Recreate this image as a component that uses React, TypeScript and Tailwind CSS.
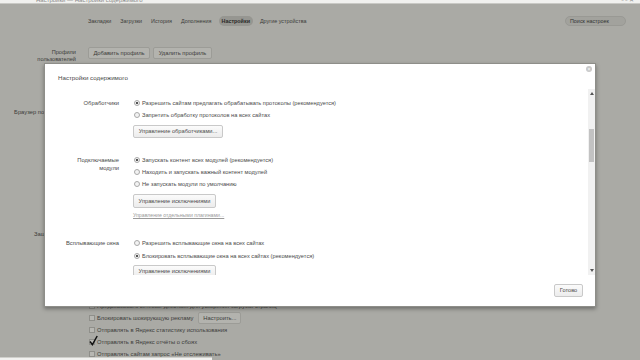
import type { ReactNode } from 'react';

function Radio({ checked, children }: { checked?: boolean; children: ReactNode }) {
  return (
    <div className="flex h-[12px] items-center">
      <span className="ml-[1px] flex h-[6px] w-[6px] items-center justify-center rounded-full border border-[#a9a9a9] bg-[#f3f3f3]">
        {checked && <span className="h-[2px] w-[2px] rounded-full bg-[#1e1e1e]" />}
      </span>
      <span className="ml-[2px] whitespace-nowrap text-[5.7px] text-[#4a4a4a]">{children}</span>
    </div>
  );
}

function ModalButton({ children, className = '' }: { children: ReactNode; className?: string }) {
  return (
    <div
      className={`flex items-center justify-center rounded-[2px] border border-[#c9c9c9] bg-gradient-to-b from-[#fbfbfb] to-[#ececec] text-[5.7px] whitespace-nowrap text-[#4a4a4a] ${className}`}
    >
      {children}
    </div>
  );
}

function PageButton({ children, className = '' }: { children: ReactNode; className?: string }) {
  return (
    <div
      className={`flex items-center justify-center rounded-[2px] border border-[#9c9c97] bg-[#b3b3ae] text-[5.8px] whitespace-nowrap text-[#3c3c3a] ${className}`}
    >
      {children}
    </div>
  );
}

function Check({ checked, children }: { checked?: boolean; children?: ReactNode }) {
  return (
    <div className="flex h-[12px] items-center">
      <span className="relative h-[6px] w-[6px] border border-[#8f8f8a] bg-[#b7b7b2]">
        {checked && (
          <svg className="absolute -left-[1px] -top-[5px] h-[11px] w-[9px]" viewBox="0 0 9 11">
            <path d="M1 6.5 L3.4 9.6 L8.2 1" fill="none" stroke="#111" strokeWidth="1.5" />
          </svg>
        )}
      </span>
      {children && <span className="ml-[2px] whitespace-nowrap text-[5.8px] text-[#3c3c3a]">{children}</span>}
    </div>
  );
}

export default function App() {
  return (
    <div className="relative h-[360px] w-[640px] overflow-hidden bg-[#aaaaa5] font-['Liberation_Sans',Arial,sans-serif] text-[#3c3c3a]">
      {/* window title strip */}
      <div className="h-[4px] overflow-hidden border-b border-[#c9c9c5] bg-[#f1f1ef]">
        <div className="-mt-[4px] flex pl-[36px] text-[6px] leading-[8px] text-[#8a8a8a]">
          <span>Настройки — Настройки содержимого</span>
          <span className="ml-auto pr-[6px]">▫ ▫ ✕</span>
        </div>
      </div>

      {/* nav */}
      <div className="mt-[12px] flex h-[10px] items-center pl-[88px] text-[5.4px] text-[#3c3c3a]">
        <div className="flex items-center gap-[9px]">
          <span>Закладки</span>
          <span>Загрузки</span>
          <span>История</span>
          <span>Дополнения</span>
          <span className="-mx-[2px] rounded-full bg-[#969691] px-[3px] py-[1px] font-bold text-[#2a2a28]">Настройки</span>
          <span>Другие устройства</span>
        </div>
        <div className="ml-auto mr-[14px] flex h-[10px] w-[61px] items-center rounded-full border border-[#999994] bg-[#a2a29d] pl-[4px] text-[5.4px] text-[#333]">
          Поиск настроек
        </div>
      </div>

      {/* profiles */}
      <div className="mt-[21px] flex h-[16px]">
        <div className="w-[76px] pt-[2px] text-right text-[5.6px] leading-[7px]">
          Профили
          <br />
          пользователей
        </div>
        <div className="ml-[12px] flex gap-[3px]">
          <PageButton className="h-[12px] w-[62px]">Добавить профиль</PageButton>
          <PageButton className="h-[12px] w-[59px]">Удалить профиль</PageButton>
        </div>
      </div>

      {/* default browser */}
      <div className="mt-[45px] flex h-[8px]">
        <div className="w-[76px] whitespace-nowrap text-right text-[5.8px] leading-[8px]">Браузер по умолчанию</div>
      </div>

      {/* privacy */}
      <div className="mt-[112px] flex">
        <div className="w-[76px] pt-[2px] text-right text-[5.8px] leading-[8px]">
          Защита личных
          <br />
          данных
        </div>
        <div className="ml-[13px] flex flex-col">
          {/* rows hidden under the dialog */}
          <Check />
          <Check />
          <Check />
          <Check />
          <Check />
          <Check />
          <Check>Предсказывать сетевые действия для ускорения загрузки страниц</Check>
          <div className="flex h-[12px] items-center">
            <Check>Блокировать шокирующую рекламу</Check>
            <PageButton className="ml-[5px] h-[12px] w-[43px]">Настроить...</PageButton>
          </div>
          <Check>Отправлять в Яндекс статистику использования</Check>
          <Check checked>Отправлять в Яндекс отчёты о сбоях</Check>
          <Check>Отправлять сайтам запрос «Не отслеживать»</Check>
        </div>
      </div>

      {/* bottom bar */}
      <div className="absolute bottom-0 left-0 h-[3px] w-[212px] border-t border-[#d0d0cc] bg-[#f2f2f0]" />

      {/* modal */}
      <div className="absolute left-[44px] top-[63px] flex h-[244px] w-[552px] flex-col border border-[#8e8e89] bg-white shadow-[0_2px_4px_rgba(0,0,0,0.35)]">
        <div className="relative h-[25px] shrink-0 pl-[13px] pt-[10px] text-[6.2px] leading-[8px] text-[#4a4a4a]">
          Настройки содержимого
          <div className="absolute right-[3px] top-[2px] flex h-[6px] w-[6px] items-center justify-center rounded-full bg-[#c8c8c8] text-[5px] leading-none text-white">
            ×
          </div>
        </div>

        <div className="flex h-[186px] shrink-0">
          <div className="flex-1 overflow-hidden">
            {/* handlers */}
            <div className="mt-[8px] flex">
              <div className="w-[74px] pt-[2px] text-right text-[5.8px] leading-[8px] text-[#4a4a4a]">Обработчики</div>
              <div className="ml-[14px] flex flex-col">
                <Radio checked>Разрешить сайтам предлагать обрабатывать протоколы (рекомендуется)</Radio>
                <Radio>Запретить обработку протоколов на всех сайтах</Radio>
                <ModalButton className="mt-[4px] h-[13px] w-[90px]">Управление обработчиками...</ModalButton>
              </div>
            </div>

            {/* plugins */}
            <div className="mt-[16px] flex">
              <div className="w-[74px] pt-[2px] text-right text-[5.8px] leading-[8px] text-[#4a4a4a]">
                Подключаемые
                <br />
                модули
              </div>
              <div className="ml-[14px] flex flex-col">
                <Radio checked>Запускать контент всех модулей (рекомендуется)</Radio>
                <Radio>Находить и запускать важный контент модулей</Radio>
                <Radio>Не запускать модули по умолчанию</Radio>
                <ModalButton className="mt-[4px] h-[14px] w-[83px]">Управление исключениями</ModalButton>
                <div className="mt-[2px] flex h-[12px] items-center text-[5.2px] text-[#9a9a9a] underline">
                  Управление отдельными плагинами...
                </div>
              </div>
            </div>

            {/* popups */}
            <div className="mt-[15px] flex">
              <div className="w-[74px] pt-[2px] text-right text-[5.8px] leading-[8px] text-[#4a4a4a]">Всплывающие окна</div>
              <div className="ml-[14px] flex flex-col">
                <Radio>Разрешить всплывающие окна на всех сайтах</Radio>
                <div className="mt-[1px]">
                  <Radio checked>Блокировать всплывающие окна на всех сайтах (рекомендуется)</Radio>
                </div>
                <ModalButton className="mt-[3px] h-[13px] w-[83px]">Управление исключениями</ModalButton>
              </div>
            </div>
          </div>

          {/* scrollbar */}
          <div className="relative w-[7px] bg-[#f1f1f1]">
            <div className="flex h-[8px] items-center justify-center">
              <span className="h-0 w-0 border-x-[2px] border-b-[3px] border-x-transparent border-b-[#555]" />
            </div>
            <div className="mx-auto mt-[32px] h-[33px] w-[5px] bg-[#c2c2c2]" />
            <div className="absolute bottom-[1px] left-0 flex h-[8px] w-[7px] items-center justify-center">
              <span className="h-0 w-0 border-x-[2px] border-t-[3px] border-x-transparent border-t-[#555]" />
            </div>
          </div>
        </div>

        <div className="flex flex-1 justify-end pr-[12px] pt-[9px]">
          <ModalButton className="h-[13px] w-[29px]">Готово</ModalButton>
        </div>
      </div>
    </div>
  );
}
